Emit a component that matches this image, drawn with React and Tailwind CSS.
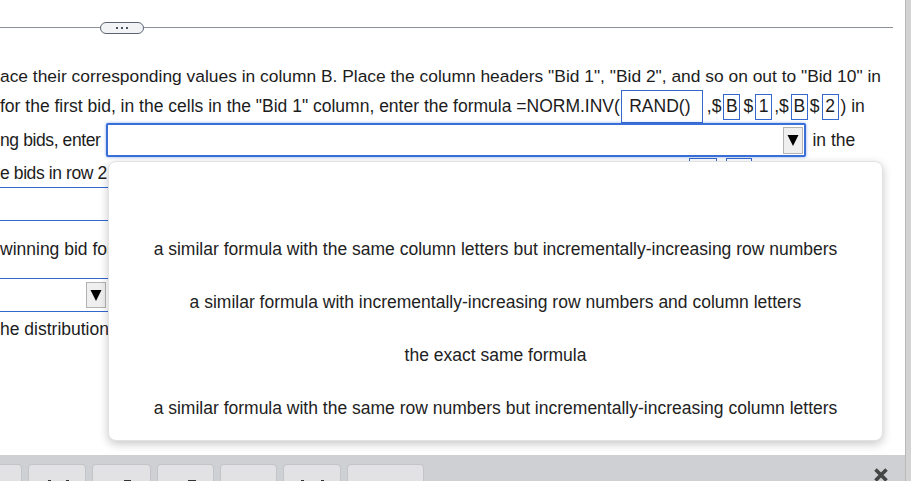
import React from 'react'

const blue = 'border-[#3467cf]'

function Cell({ children, className = '' }) {
  return (
    <span className={`inline-flex items-center justify-center border ${blue} ${className}`}>
      {children}
    </span>
  )
}

function Arrow({ className = '' }) {
  return (
    <span
      className={`flex items-center justify-center bg-[#efefef] border border-[#b3b3b3] ${className}`}
    >
      <svg className="h-[12px] w-[12px]" viewBox="0 0 12 12">
        <path d="M0.5 1 H11.5 L6 12 Z" fill="#000" />
      </svg>
    </span>
  )
}

const options = [
  '',
  'a similar formula with the same column letters but incrementally-increasing row numbers',
  'a similar formula with incrementally-increasing row numbers and column letters',
  'the exact same formula',
  'a similar formula with the same row numbers but incrementally-increasing column letters',
]

const tabs = [
  { w: 'w-[58px] -ml-[36px]', marks: [] },
  { w: 'w-[58px]', marks: ['ml-[19px] w-[3px] h-[2px]', 'ml-[15px] w-[3px] h-[2px]'] },
  { w: 'w-[59px]', marks: ['ml-[31px] w-[7px] h-[2px]'] },
  { w: 'w-[57px]', marks: ['ml-[30px] w-[8px] h-[2px]'] },
  { w: 'w-[57px]', marks: [] },
  { w: 'w-[58px]', marks: ['ml-[17px] w-[3px] h-[2px]', 'ml-[17px] w-[3px] h-[2px]'] },
  { w: 'w-[77px]', marks: [] },
]

export default function App() {
  return (
    <div className="flex h-[481px] w-[911px] overflow-hidden bg-white font-['Liberation_Sans',Arial,sans-serif] text-[17.5px] text-[#1c1c1c]">
      <div className="relative flex flex-1 flex-col overflow-hidden">
        {/* collapse bar */}
        <div className="mr-[12px] flex h-[62px] items-start pt-[22px]">
          <div className="mt-[5px] h-px w-[100px] bg-[#8c9197]" />
          <button className="flex h-[12px] w-[44px] items-center justify-center gap-[3px] rounded-full border border-[#5d6574] bg-[#f2f3f5]">
            <span className="h-[2px] w-[2px] bg-[#4a5160]" />
            <span className="h-[2px] w-[2px] bg-[#4a5160]" />
            <span className="h-[2px] w-[2px] bg-[#4a5160]" />
          </button>
          <div className="mt-[5px] h-px flex-1 bg-[#8c9197]" />
        </div>

        {/* question text */}
        <div className="flex-1 whitespace-nowrap">
          <div className="flex h-[28px] items-center text-[17.4px]">
            ace their corresponding values in column B. Place the column headers "Bid 1", "Bid 2", and so on out to "Bid 10" in
          </div>
          <div className="flex h-[33px] items-center">
            <span>for the first bid, in the cells in the "Bid 1" column, enter the formula =NORM.INV(</span>
            <Cell className="ml-[1px] h-[33px] w-[82px] pr-[4px]">RAND()</Cell>
            <span className="ml-[4px]">,$</span>
            <Cell className="ml-[2px] h-[26px] w-[17px]">B</Cell>
            <span className="ml-[3px]">$</span>
            <Cell className="ml-[2px] h-[26px] w-[17px]">1</Cell>
            <span className="ml-[2px]">,$</span>
            <Cell className="ml-[2px] h-[26px] w-[17px]">B</Cell>
            <span className="ml-[2px]">$</span>
            <Cell className="ml-[2px] h-[26px] w-[17px]">2</Cell>
            <span className="ml-[2px]">) in</span>
          </div>
          <div className="flex h-[34px] items-center">
            <span className="tracking-[-0.4px]">ng bids, enter</span>
            <div className="ml-[6px] flex h-[34px] w-[700px] items-center justify-end rounded-[2px] border-2 border-[#3a6fd8] bg-white pr-[1px] shadow-[0_0_3px_rgba(58,111,216,0.6)]">
              <Arrow className="h-[27px] w-[20px]" />
            </div>
            <span className="ml-[6px]">in the</span>
          </div>
          <div className="flex h-[30px] items-start">
            <span className="mt-[3px] w-[108px] tracking-[-0.4px]">e bids in row 2</span>
            <span className={`ml-[581px] mt-[1px] h-[20px] w-[28px] border ${blue}`} />
            <span className={`ml-[9px] mt-[1px] h-[20px] w-[26px] border ${blue}`} />
          </div>
          <div className={`-ml-[2px] h-[34px] w-[400px] border ${blue}`} />
          <div className="flex h-[57px] w-[108px] items-center overflow-hidden">winning bid for</div>
          <div className={`-ml-[2px] flex h-[34px] w-[112px] items-center justify-end border ${blue} pr-[3px]`}>
            <Arrow className="h-[26px] w-[20px]" />
          </div>
          <div className="flex h-[34px] w-[108px] items-center overflow-hidden">he distribution</div>
        </div>

        {/* bottom toolbar */}
        <div className="flex h-[26px] items-start gap-[6px] bg-[#cfd0d4] pt-[9px]">
          {tabs.map((t, i) => (
            <div
              key={i}
              className={`flex h-[20px] shrink-0 items-end rounded-t-[4px] border border-b-0 border-[#c3c4c9] bg-[#e2e2e5] ${t.w}`}
            >
              {t.marks.map((m, j) => (
                <span key={j} className={`mb-[2px] bg-[#333] ${m}`} />
              ))}
            </div>
          ))}
          <div className="flex-1" />
          <svg className="mr-[16px] mt-[3px] h-[16px] w-[16px] shrink-0" viewBox="0 0 16 16">
            <path d="M2.5 2.5 L13.5 13.5 M13.5 2.5 L2.5 13.5" stroke="#454545" strokeWidth="3.6" strokeLinecap="butt" />
          </svg>
        </div>

        {/* open dropdown list */}
        <div className="absolute left-[108px] top-[161px] h-[280px] w-[775px] rounded-[8px] border border-[#e2e2e2] bg-white pt-[8px] shadow-[0_3px_10px_rgba(0,0,0,0.22)]">
          {options.map((o, i) => (
            <div key={i} className="flex h-[53px] items-center justify-center whitespace-nowrap text-[#222]">
              {o}
            </div>
          ))}
        </div>
      </div>
      <div className="w-[6px] shrink-0 border-l border-[#b9b9b9] bg-[#d3d3d3]" />
    </div>
  )
}
